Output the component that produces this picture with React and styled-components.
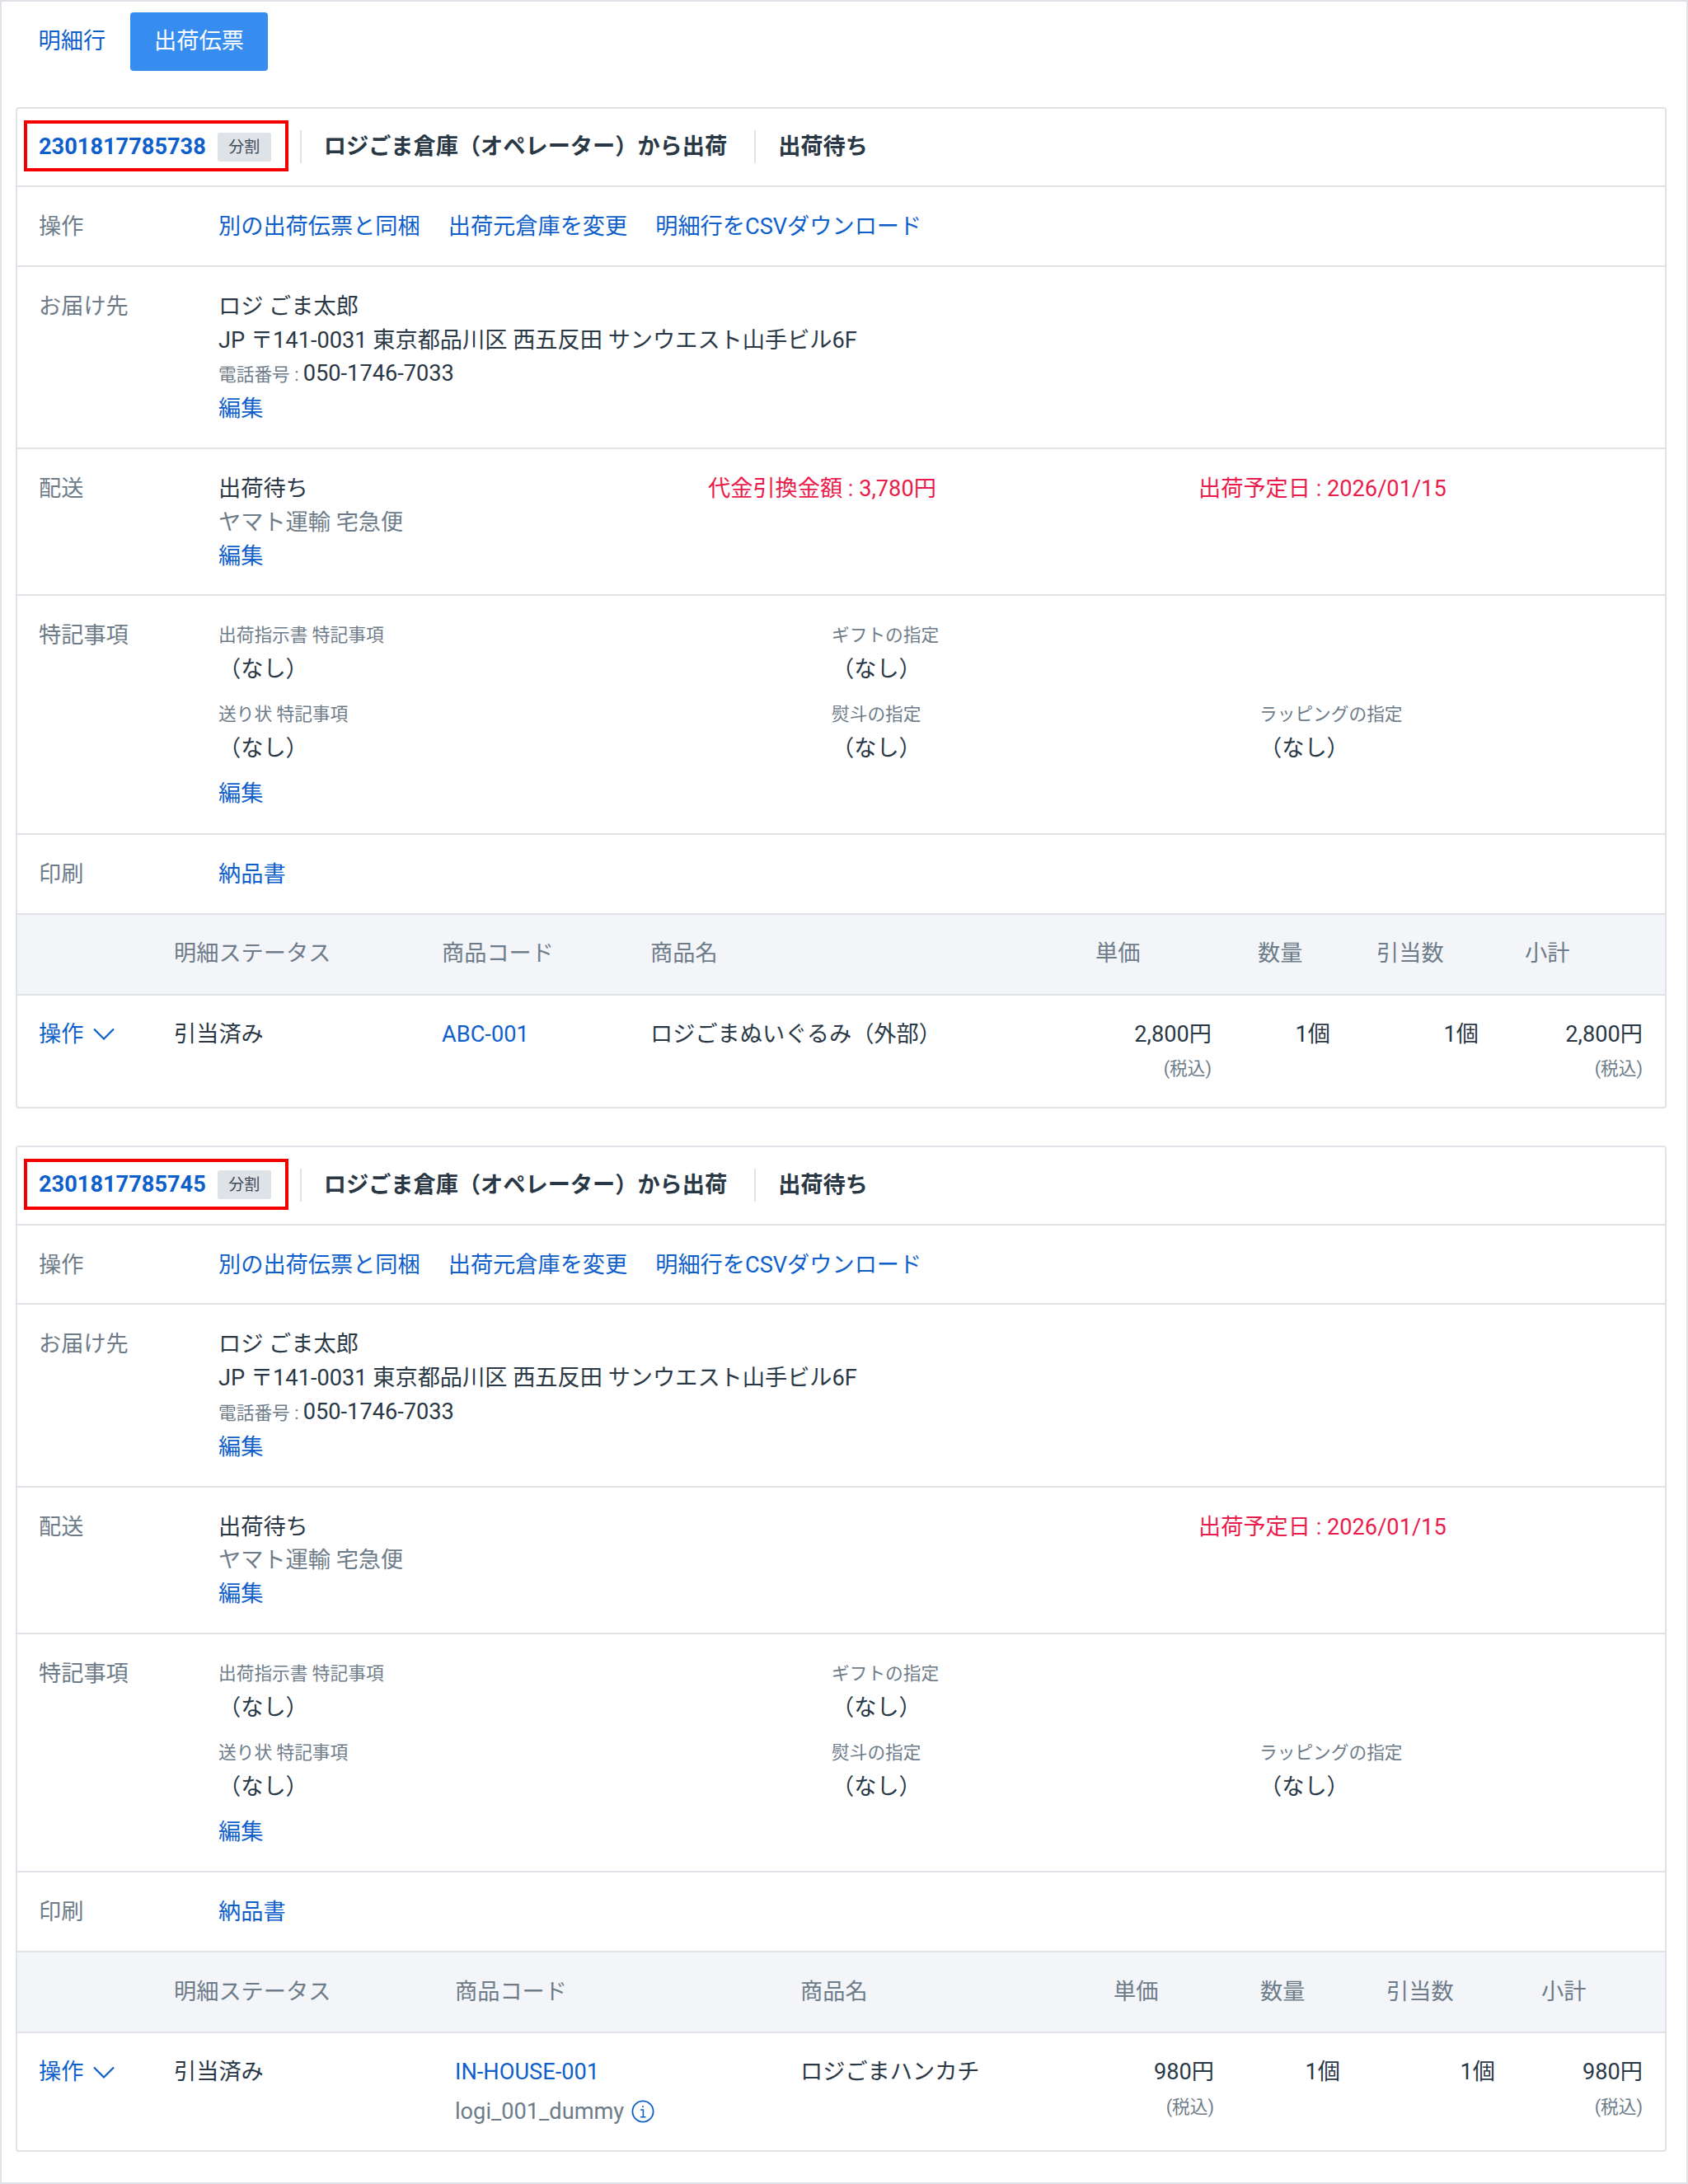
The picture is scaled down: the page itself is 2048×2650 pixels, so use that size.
import React from "react";
import styled, { createGlobalStyle } from "styled-components";

const GlobalStyle = createGlobalStyle`
  body {
    margin: 0;
    background: #fff;
    color: #2a3846;
    font-family: Roboto, "Noto Sans CJK JP", sans-serif;
    font-size: 27.2px;
    line-height: 40.8px;
  }
`;

const LINK = "#0f5fcb";
const GRAY = "#6e7c89";
const LINE = "#dfe3e8";
const RED = "#ea1c4c";

const Page = styled.div`
  box-sizing: border-box;
  width: 2048px;
  height: 2650px;
  padding: 13px 24px 0 17px;
  border: 2px solid ${LINE};
`;

const Tabs = styled.div`
  display: flex;
  margin: 0 0 44px -2px;
`;

const Tab = styled.div`
  height: 71px;
  padding: 0 29.5px;
  border-radius: 4px;
  line-height: 71px;
  color: ${(p) => (p.$active ? "#fff" : LINK)};
  background: ${(p) => (p.$active ? "#378cf0" : "transparent")};
`;

const Card = styled.section`
  position: relative;
  border: 2px solid ${LINE};
  border-radius: 4px;
  margin-bottom: 45px;
`;

const Header = styled.header`
  display: flex;
  align-items: center;
  height: 95px;
  box-sizing: border-box;
  padding: 0 26px 1px;
  border-bottom: 2px solid ${LINE};
  font-weight: 700;
`;

const RedMark = styled.div`
  position: absolute;
  left: 8px;
  top: 14px;
  width: 321px;
  height: 62px;
  box-sizing: border-box;
  border: 4px solid #f40000;
`;

const SlipNo = styled.a`
  color: ${LINK};
`;

const Badge = styled.span`
  width: 65px;
  height: 35px;
  margin-left: 14px;
  border-radius: 3px;
  background: #dfe3e7;
  color: #3d4a57;
  font-size: 19px;
  font-weight: 400;
  line-height: 35px;
  text-align: center;
`;

const HeadItem = styled.div`
  height: 40px;
  padding-left: 27px;
  margin-left: ${(p) => p.$gap}px;
  border-left: 2px solid ${LINE};
  line-height: 40px;
`;

const Row = styled.div`
  display: flex;
  padding: 28px 26px ${(p) => p.$bottom ?? 27}px;
  border-bottom: 2px solid ${LINE};
`;

const RowLabel = styled.div`
  flex: 0 0 218px;
  color: ${GRAY};
`;

const RowBody = styled.div`
  flex: 1;
  min-width: 0;
`;

const Links = styled.div`
  display: flex;
  gap: 34px;
`;

const TextLink = styled.a`
  display: ${(p) => (p.$block ? "block" : "inline")};
  color: ${LINK};
`;

const Muted = styled.div`
  color: ${GRAY};
`;

const Small = styled.span`
  color: ${GRAY};
  font-size: 21.7px;
`;

const DeliveryGrid = styled.div`
  display: grid;
  grid-template-columns: 594px 595px 1fr;
`;

const Alert = styled.div`
  color: ${RED};
`;

const NotesGrid = styled.div`
  display: grid;
  grid-template-columns: 744px 519px 1fr;
  row-gap: 14px;
  margin-bottom: 14px;
`;

const NoteLabel = styled.div`
  margin: 2px 0 3px;
  color: ${GRAY};
  font-size: 21.7px;
  line-height: 36px;
`;

const TableHead = styled.div`
  display: grid;
  grid-template-columns: ${(p) => p.$columns};
  height: 98px;
  box-sizing: border-box;
  padding: 0 26px;
  align-items: center;
  background: #f3f5f9;
  border-bottom: 2px solid ${LINE};
  color: ${GRAY};
`;

const TableRow = styled.div`
  display: grid;
  grid-template-columns: ${(p) => p.$columns};
  height: ${(p) => p.$height}px;
  box-sizing: border-box;
  padding: 27px 26px 0;
  align-items: start;
`;

const ActionMenu = styled.a`
  display: flex;
  align-items: center;
  gap: 12px;
  color: ${LINK};
`;

const NumberCell = styled.div`
  padding-right: ${(p) => (p.$last ? 0 : 56)}px;
  text-align: right;
`;

const TaxNote = styled.div`
  margin-top: 3px;
  color: ${GRAY};
  font-size: 21.7px;
  line-height: 38px;
`;

const SubCode = styled.div`
  display: flex;
  align-items: center;
  gap: 9px;
  margin-top: 7px;
  color: ${GRAY};
`;

function Chevron() {
  return (
    <svg width="26" height="15" viewBox="0 0 26 15" fill="none" stroke={LINK} strokeWidth="2.2">
      <path d="M1 1.5 L13 13.5 L25 1.5" />
    </svg>
  );
}

function InfoIcon() {
  return (
    <svg width="28" height="28" viewBox="0 0 28 28" fill="none" stroke={LINK} strokeWidth="1.8">
      <circle cx="14" cy="14" r="12.6" />
      <path d="M11 12 H14.4 V20.5 M11 20.8 H17.5" strokeWidth="1.6" />
      <circle cx="14" cy="8" r="1.1" fill={LINK} stroke="none" />
    </svg>
  );
}

const shipments = [
  {
    id: "2301817785738",
    cod: "代金引換金額 : 3,780円",
    columns: "164px 325px 253px 540px 197px 144px 180px 143px",
    height: 135,
    code: "ABC-001",
    name: "ロジごまぬいぐるみ（外部）",
    price: "2,800円",
  },
  {
    id: "2301817785745",
    columns: "164px 341px 419px 380px 178px 153px 188px 123px",
    height: 142,
    code: "IN-HOUSE-001",
    subCode: "logi_001_dummy",
    name: "ロジごまハンカチ",
    price: "980円",
  },
];

const notes = [
  "出荷指示書 特記事項",
  "ギフトの指定",
  null,
  "送り状 特記事項",
  "熨斗の指定",
  "ラッピングの指定",
];

function ShipmentCard({ item }) {
  return (
    <Card>
      <Header>
        <SlipNo>{item.id}</SlipNo>
        <Badge>分割</Badge>
        <HeadItem $gap={35}>ロジごま倉庫（オペレーター）から出荷</HeadItem>
        <HeadItem $gap={33}>出荷待ち</HeadItem>
      </Header>
      <RedMark />

      <Row $bottom={26}>
        <RowLabel>操作</RowLabel>
        <RowBody>
          <Links>
            <TextLink>別の出荷伝票と同梱</TextLink>
            <TextLink>出荷元倉庫を変更</TextLink>
            <TextLink>明細行をCSVダウンロード</TextLink>
          </Links>
        </RowBody>
      </Row>

      <Row $bottom={26}>
        <RowLabel>お届け先</RowLabel>
        <RowBody>
          <div>ロジ ごま太郎</div>
          <div>JP 〒141-0031 東京都品川区 西五反田 サンウエスト山手ビル6F</div>
          <div>
            <Small>電話番号 : </Small>050-1746-7033
          </div>
          <TextLink $block>編集</TextLink>
        </RowBody>
      </Row>

      <Row $bottom={26}>
        <RowLabel>配送</RowLabel>
        <RowBody>
          <DeliveryGrid>
            <div>
              <div>出荷待ち</div>
              <Muted>ヤマト運輸 宅急便</Muted>
              <TextLink $block>編集</TextLink>
            </div>
            <Alert>{item.cod}</Alert>
            <Alert>出荷予定日 : 2026/01/15</Alert>
          </DeliveryGrid>
        </RowBody>
      </Row>

      <Row>
        <RowLabel>特記事項</RowLabel>
        <RowBody>
          <NotesGrid>
            {notes.map((label, i) =>
              label ? (
                <div key={label}>
                  <NoteLabel>{label}</NoteLabel>
                  <div>（なし）</div>
                </div>
              ) : (
                <div key={i} />
              )
            )}
          </NotesGrid>
          <TextLink $block>編集</TextLink>
        </RowBody>
      </Row>

      <Row $bottom={26}>
        <RowLabel>印刷</RowLabel>
        <RowBody>
          <TextLink>納品書</TextLink>
        </RowBody>
      </Row>

      <TableHead $columns={item.columns}>
        <div />
        <div>明細ステータス</div>
        <div>商品コード</div>
        <div>商品名</div>
        <div>単価</div>
        <div>数量</div>
        <div>引当数</div>
        <div>小計</div>
      </TableHead>
      <TableRow $columns={item.columns} $height={item.height}>
        <ActionMenu>
          操作
          <Chevron />
        </ActionMenu>
        <div>引当済み</div>
        <div>
          <TextLink $block>{item.code}</TextLink>
          {item.subCode && (
            <SubCode>
              {item.subCode}
              <InfoIcon />
            </SubCode>
          )}
        </div>
        <div>{item.name}</div>
        <NumberCell>
          {item.price}
          <TaxNote>(税込)</TaxNote>
        </NumberCell>
        <NumberCell>1個</NumberCell>
        <NumberCell>1個</NumberCell>
        <NumberCell $last>
          {item.price}
          <TaxNote>(税込)</TaxNote>
        </NumberCell>
      </TableRow>
    </Card>
  );
}

export default function App() {
  return (
    <>
      <GlobalStyle />
      <Page>
        <Tabs>
          <Tab>明細行</Tab>
          <Tab $active>出荷伝票</Tab>
        </Tabs>
        {shipments.map((item) => (
          <ShipmentCard key={item.id} item={item} />
        ))}
      </Page>
    </>
  );
}
